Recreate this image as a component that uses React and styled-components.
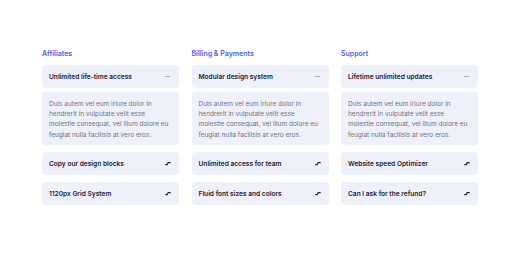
import React from "react";
import styled, { createGlobalStyle } from "styled-components";

const Global = createGlobalStyle`
  html, body { margin: 0; padding: 0; background: #ffffff; }
  body { font-family: Inter, "Noto Sans", sans-serif; }
`;

const Page = styled.div`
  width: 520px;
  height: 257px;
  display: flex;
  justify-content: center;
  padding-top: 49px;
  box-sizing: border-box;
`;

const Grid = styled.div`
  display: grid;
  grid-template-columns: repeat(3, 137px);
  column-gap: 12.5px;
  align-items: start;
`;

const Column = styled.div`
  display: flex;
  flex-direction: column;
`;

const Heading = styled.h3`
  margin: 0 0 7px;
  height: 9px;
  font-size: 7px;
  line-height: 9px;
  font-weight: 600;
  color: #4660e6;
`;

const Item = styled.div`
  display: flex;
  flex-direction: column;
  gap: 4px;
  margin-bottom: 7px;
`;

const Header = styled.div`
  height: 23px;
  box-sizing: border-box;
  padding: 0 8px 0 7px;
  display: flex;
  align-items: center;
  justify-content: space-between;
  background: #eef0fa;
  border-radius: 4px;
  font-size: 6.6px;
  font-weight: 600;
  color: #1f2033;
`;

const Body = styled.div`
  height: 53px;
  box-sizing: border-box;
  padding: 6.5px 7px;
  background: #eef0fa;
  border-radius: 4px;
  font-size: 6.5px;
  line-height: 10.4px;
  color: #70727f;
`;

const Minus = styled.span`
  width: 5px;
  height: 1px;
  background: #a7a9b8;
  margin-right: 1px;
`;

const Toggle = () => (
  <svg width="6" height="5" viewBox="0 0 6 5">
    <path d="M0.3 3.6 L2.2 3.6 L3.2 1.6 L5.7 1.6" stroke="#22232f" strokeWidth="1.2" fill="none" />
  </svg>
);

const text =
  "Duis autem vel eum iriure dolor in hendrerit in vulputate velit esse molestie consequat, vel illum dolore eu feugiat nulla facilisis at vero eros.";

const data = [
  {
    title: "Affiliates",
    items: ["Unlimited life-time access", "Copy our design blocks", "1120px Grid System"],
  },
  {
    title: "Billing & Payments",
    items: ["Modular design system", "Unlimited access for team", "Fluid font sizes and colors"],
  },
  {
    title: "Support",
    items: ["Lifetime unlimited updates", "Website speed Optimizer", "Can I ask for the refund?"],
  },
];

export default function App() {
  return (
    <>
      <Global />
      <Page>
        <Grid>
          {data.map((col) => (
            <Column key={col.title}>
              <Heading>{col.title}</Heading>
              {col.items.map((it, i) => (
                <Item key={it}>
                  <Header>
                    <span>{it}</span>
                    {i === 0 ? <Minus /> : <Toggle />}
                  </Header>
                  {i === 0 && <Body>{text}</Body>}
                </Item>
              ))}
            </Column>
          ))}
        </Grid>
      </Page>
    </>
  );
}
